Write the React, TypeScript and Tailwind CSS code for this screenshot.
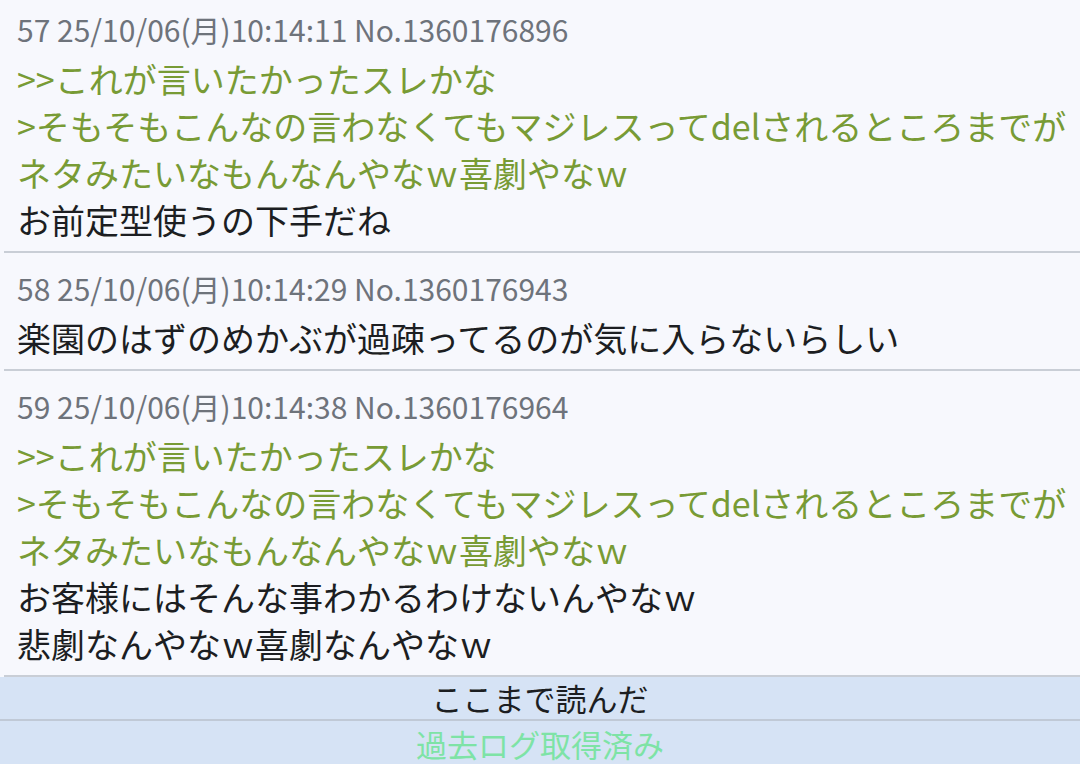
import React from "react";

const FONT = { fontFamily: '"Noto Sans CJK JP", "Noto Sans", sans-serif' };

type Line = { t: string; q?: boolean };

const posts: { head: string; lines: Line[]; first?: boolean }[] = [
  {
    head: "57 25/10/06(月)10:14:11 No.1360176896",
    first: true,
    lines: [
      { t: ">>これが言いたかったスレかな", q: true },
      { t: ">そもそもこんなの言わなくてもマジレスってdelされるところまでが", q: true },
      { t: "ネタみたいなもんなんやなｗ喜劇やなｗ", q: true },
      { t: "お前定型使うの下手だね" },
    ],
  },
  {
    head: "58 25/10/06(月)10:14:29 No.1360176943",
    lines: [{ t: "楽園のはずのめかぶが過疎ってるのが気に入らないらしい" }],
  },
  {
    head: "59 25/10/06(月)10:14:38 No.1360176964",
    lines: [
      { t: ">>これが言いたかったスレかな", q: true },
      { t: ">そもそもこんなの言わなくてもマジレスってdelされるところまでが", q: true },
      { t: "ネタみたいなもんなんやなｗ喜劇やなｗ", q: true },
      { t: "お客様にはそんな事わかるわけないんやなｗ" },
      { t: "悲劇なんやなｗ喜劇なんやなｗ" },
    ],
  },
];

export default function App() {
  return (
    <div className="w-[1080px] h-[764px] overflow-hidden bg-[#f7f8fd] flex flex-col" style={FONT}>
      {posts.map((p, i) => (
        <div key={i} className="flex flex-col">
          <div className={`px-[17px] ${p.first ? "pt-[9px]" : "pt-[15px]"} pb-[8px]`}>
            <div className="text-[30px] leading-[40px] text-[#6e737b] whitespace-nowrap">{p.head}</div>
            <div className="mt-[6px] text-[34px] leading-[47px] whitespace-nowrap">
              {p.lines.map((l, j) => (
                <div key={j} className={l.q ? "text-[#789b35]" : "text-[#1c1e22]"}>
                  {l.t}
                </div>
              ))}
            </div>
          </div>
          <div className="ml-[4px] h-[2px] bg-[#c9ced6]" />
        </div>
      ))}
      <div className="flex-1 flex flex-col bg-[#d6e3f5]">
        <div className="h-[42px] flex items-center justify-center text-[31px] text-[#1c1e22]">ここまで読んだ</div>
        <div className="h-[2px] bg-[#c0c9d6]" />
        <div className="flex-1 flex items-center justify-center text-[31px] text-[#7ee3a6]">過去ログ取得済み</div>
      </div>
    </div>
  );
}
